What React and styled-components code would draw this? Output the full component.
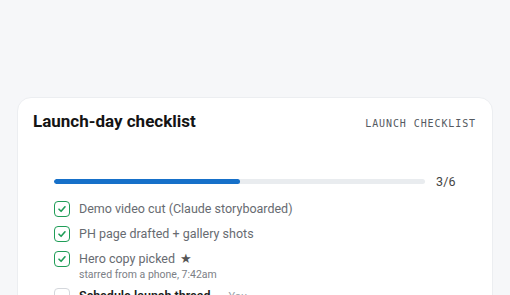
import React from 'react';
import styled, { createGlobalStyle } from 'styled-components';

const Global = createGlobalStyle`
    body {
        margin: 0;
        background: #f6f7f9;
        font-family: Roboto, 'Noto Sans', sans-serif;
    }
`;

const items = [
    { label: 'Demo video cut (Claude storyboarded)', done: true },
    { label: 'PH page drafted + gallery shots', done: true },
    { label: 'Hero copy picked', done: true, star: true, note: 'starred from a phone, 7:42am' },
    { label: 'Schedule launch thread', done: false, owner: 'You' },
];

function Check({ done }) {
    return (
        <Box done={done ? 1 : 0}>
            {done && (
                <svg width='10' height='10' viewBox='0 0 10 10'>
                    <path d='M2 5.2 L4.1 7.3 L8 2.8' fill='none' stroke='#1f9d57' strokeWidth='1.6' strokeLinecap='round' strokeLinejoin='round' />
                </svg>
            )}
        </Box>
    );
}

export default function App() {
    const done = items.filter((i) => i.done).length;
    const total = 6;
    return (
        <>
            <Global />
            <Page>
                <Card>
                    <Header>
                        <Title>Launch-day checklist</Title>
                        <Tag>LAUNCH CHECKLIST</Tag>
                    </Header>
                    <Body>
                        <ProgressRow>
                            <Track>
                                <Fill style={{ width: `${(done / total) * 100}%` }} />
                            </Track>
                            <Count>{done}/{total}</Count>
                        </ProgressRow>
                        <List>
                            {items.map((it, i) => (
                                <Item key={i}>
                                    <Check done={it.done} />
                                    <ItemText>
                                        <Label done={it.done ? 1 : 0}>
                                            {it.label}
                                            {it.star && <Star>★</Star>}
                                            {it.owner && <Owner>{it.owner}</Owner>}
                                        </Label>
                                        {it.note && <Note>{it.note}</Note>}
                                    </ItemText>
                                </Item>
                            ))}
                        </List>
                    </Body>
                </Card>
            </Page>
        </>
    );
}

const Page = styled.div`
    padding: 97px 17px 0;
    height: 295px;
    box-sizing: border-box;
    overflow: hidden;
`;

const Card = styled.div`
    background: #fff;
    border: 1px solid #eceef1;
    border-radius: 14px;
    padding: 11px 16px 20px 15px;
    min-height: 260px;
`;

const Header = styled.div`
    display: flex;
    justify-content: space-between;
    align-items: center;
`;

const Title = styled.h1`
    margin: 0;
    font-size: 17px;
    font-weight: 700;
    color: #141414;
    line-height: 24px;
`;

const Tag = styled.span`
    font-family: 'DejaVu Sans Mono', 'Liberation Mono', monospace;
    font-size: 10px;
    letter-spacing: 0.9px;
    color: #555a61;
    margin-top: 4px;
`;

const Body = styled.div`
    padding: 41px 21px 0 21px;
`;

const ProgressRow = styled.div`
    display: flex;
    align-items: center;
    gap: 11px;
    height: 15px;
`;

const Track = styled.div`
    flex: 1;
    height: 5px;
    border-radius: 3px;
    background: #e9ecef;
    overflow: hidden;
`;

const Fill = styled.div`
    height: 100%;
    border-radius: 3px;
    background: #1670c9;
`;

const Count = styled.span`
    font-size: 12.5px;
    line-height: 15px;
    color: #444;
    letter-spacing: 0.1px;
    width: 19px;
`;

const List = styled.div`
    display: flex;
    flex-direction: column;
    gap: 6.8px;
    margin-top: 11px;
`;

const Item = styled.div`
    display: flex;
    align-items: flex-start;
    gap: 9px;
`;

const Box = styled.span`
    flex: none;
    width: 16px;
    height: 16px;
    box-sizing: border-box;
    margin-top: 1px;
    border-radius: 4px;
    border: 1.5px solid ${(p) => (p.done ? '#1f9d57' : '#d4d7dc')};
    display: grid;
    place-items: center;
`;

const ItemText = styled.div`
    display: flex;
    flex-direction: column;
`;

const Label = styled.span`
    font-size: 12.5px;
    line-height: 18px;
    color: ${(p) => (p.done ? '#676b71' : '#1b1d20')};
    font-weight: ${(p) => (p.done ? 400 : 600)};
`;

const Star = styled.span`
    margin-left: 5px;
    color: #555;
`;

const Owner = styled.span`
    margin-left: 18px;
    font-size: 11px;
    font-weight: 400;
    color: #9aa0a6;
`;

const Note = styled.span`
    font-size: 10.5px;
    color: #7c8086;
    line-height: 13px;
`;
